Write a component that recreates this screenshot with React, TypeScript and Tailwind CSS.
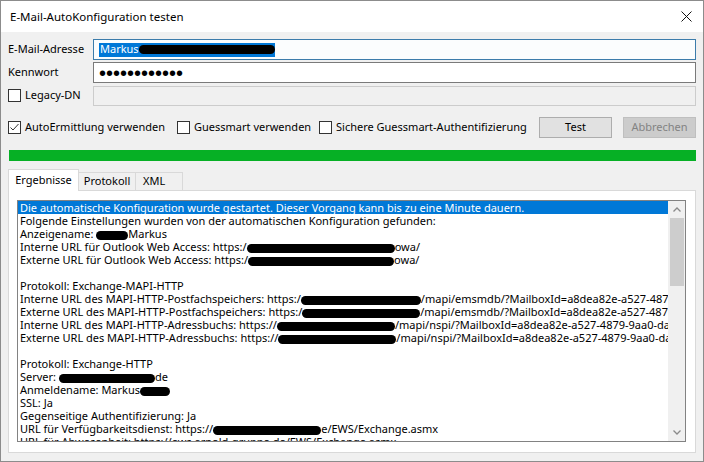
import React from 'react';

type Seg = string | { b: string };

const lines: Seg[][] = [
  ['Die automatische Konfiguration wurde gestartet. Dieser Vorgang kann bis zu eine Minute dauern.'],
  ['Folgende Einstellungen wurden von der automatischen Konfiguration gefunden:'],
  ['Anzeigename: ', { b: 'w-[32px]' }, 'Markus'],
  ['Interne URL für Outlook Web Access: https:/', { b: 'w-[148px]' }, 'owa/'],
  ['Externe URL für Outlook Web Access: https:/', { b: 'w-[146px]' }, 'owa/'],
  [''],
  ['Protokoll: Exchange-MAPI-HTTP'],
  ['Interne URL des MAPI-HTTP-Postfachspeichers: https:/', { b: 'w-[120px]' }, '/mapi/emsmdb/?MailboxId=a8dea82e-a527-4879'],
  ['Externe URL des MAPI-HTTP-Postfachspeichers: https:/', { b: 'w-[118px]' }, '/mapi/emsmdb/?MailboxId=a8dea82e-a527-4879'],
  ['Interne URL des MAPI-HTTP-Adressbuchs: https://', { b: 'w-[118px]' }, '/mapi/nspi/?MailboxId=a8dea82e-a527-4879-9aa0-daa'],
  ['Externe URL des MAPI-HTTP-Adressbuchs: https://', { b: 'w-[118px]' }, '/mapi/nspi/?MailboxId=a8dea82e-a527-4879-9aa0-daa'],
  [''],
  ['Protokoll: Exchange-HTTP'],
  ['Server: ', { b: 'w-[96px]' }, 'de'],
  ['Anmeldename: Markus', { b: 'w-[30px]' }],
  ['SSL: Ja'],
  ['Gegenseitige Authentifizierung: Ja'],
  ['URL für Verfügbarkeitsdienst: https://', { b: 'w-[108px]' }, 'e/EWS/Exchange.asmx'],
  ['URL für Abwesenheit: https://ews.arnold-gruppe.de/EWS/Exchange.asmx'],
];

const Blob = ({ cls }: { cls: string }) => (
  <span className={`inline-block h-[9px] rounded-full bg-black align-middle ${cls}`} />
);

const Checkbox = ({ checked = false }: { checked?: boolean }) => (
  <span className="w-[13px] h-[13px] shrink-0 border border-[#333333] bg-white flex items-center justify-center">
    {checked && (
      <svg width="11" height="11" viewBox="0 0 11 11">
        <polyline points="1.5,5.5 4,8 9.5,2" fill="none" stroke="#333333" strokeWidth="1" />
      </svg>
    )}
  </span>
);

const Chevron = ({ up }: { up?: boolean }) => (
  <svg width="8" height="5" viewBox="0 0 8 5">
    <polyline
      points={up ? '0.5,4.5 4,1 7.5,4.5' : '0.5,0.5 4,4 7.5,0.5'}
      fill="none"
      stroke="#8a8a8a"
      strokeWidth="1.3"
    />
  </svg>
);

export default function App() {
  return (
    <div className="w-[704px] h-[462px] flex flex-col bg-[#f0f0f0] border border-[#8c8c8c] text-[11px] text-black font-['Noto_Sans',sans-serif] overflow-hidden">
      {/* title bar */}
      <div className="h-[31px] shrink-0 bg-white flex items-center justify-between pl-[9px] pr-[11px]">
        <span className="text-[11.5px]">E-Mail-AutoKonfiguration testen</span>
        <svg width="11" height="11" viewBox="0 0 11 11">
          <line x1="0.5" y1="0.5" x2="10.5" y2="10.5" stroke="#111" strokeWidth="1" />
          <line x1="10.5" y1="0.5" x2="0.5" y2="10.5" stroke="#111" strokeWidth="1" />
        </svg>
      </div>

      <div className="flex flex-col px-[7px] pt-[7px]">
        <div className="flex items-center h-[21px]">
          <span className="w-[85px] shrink-0">E-Mail-Adresse</span>
          <div className="flex-1 h-[21px] border border-[#3c7cab] bg-[#fbfdfe] flex items-center pl-[5px]">
            <span className="h-[14px] flex items-center bg-[#0078d7] text-white pl-[1px]">
              Markus
              <Blob cls="w-[136px]" />
            </span>
          </div>
        </div>
        <div className="flex items-center h-[21px] mt-[2px]">
          <span className="w-[85px] shrink-0">Kennwort</span>
          <div className="flex-1 h-[21px] border border-[#7a7a7a] bg-white flex items-center pl-[5px]">
            <span className="font-['Liberation_Sans',sans-serif] text-[20px] leading-none">••••••••••••</span>
          </div>
        </div>
        <div className="flex items-center h-[21px] mt-[2px]">
          <span className="w-[85px] shrink-0 flex items-center gap-[4px]">
            <Checkbox />
            Legacy-DN
          </span>
          <div className="flex-1 h-[20px] border border-[#cccccc] bg-[#f0f0f0]" />
        </div>

        <div className="flex items-center h-[21px] mt-[11px]">
          <span className="w-[169px] flex items-center gap-[4px]">
            <Checkbox checked />
            AutoErmittlung verwenden
          </span>
          <span className="w-[142px] flex items-center gap-[4px]">
            <Checkbox />
            Guessmart verwenden
          </span>
          <span className="flex-1 flex items-center gap-[4px]">
            <Checkbox />
            Sichere Guessmart-Authentifizierung
          </span>
          <button className="w-[73px] h-[21px] border border-[#adadad] bg-[#e1e1e1] text-[11px]">Test</button>
          <button className="w-[73px] h-[21px] ml-[11px] border border-[#bfbfbf] bg-[#cccccc] text-[#838383] text-[11px]">
            Abbrechen
          </button>
        </div>

        <div className="h-[11px] mt-[12px] ml-[1px] bg-[#06b025]" />

        {/* tabs */}
        <div className="flex items-end h-[22px] mt-[8px]">
          <div className="w-[71px] h-[22px] bg-white border-t border-l border-r border-[#d9d9d9] flex items-center justify-center pb-[1px]">
            Ergebnisse
          </div>
          <div className="w-[57px] h-[19px] bg-[#f0f0f0] border-t border-r border-b border-[#d9d9d9] flex items-center justify-center">
            Protokoll
          </div>
          <div className="w-[47px] h-[19px] bg-[#f0f0f0] border-t border-r border-b border-[#d9d9d9] flex items-center pl-[7px]">
            XML
          </div>
          <div className="flex-1 border-b border-[#d9d9d9]" />
        </div>

        <div className="h-[262px] bg-white border-l border-r border-b border-[#d9d9d9] pl-[8px] pr-[9px] pt-[9px]">
          <div className="h-[242px] border border-[#828282] bg-white flex">
            <div className="flex-1 overflow-hidden">
              {lines.map((segs, i) => (
                <div
                  key={i}
                  className={`h-[13px] leading-[13px] whitespace-nowrap pl-[2px] ${
                    i === 0 ? 'bg-[#0078d7] text-white' : ''
                  }`}
                >
                  {segs.map((s, j) =>
                    typeof s === 'string' ? <span key={j}>{s}</span> : <Blob key={j} cls={s.b} />
                  )}
                </div>
              ))}
            </div>
            <div className="w-[17px] shrink-0 bg-[#f0f0f0] flex flex-col">
              <div className="h-[17px] flex items-center justify-center">
                <Chevron up />
              </div>
              <div className="flex-1">
                <div className="h-[68px] ml-[2px] mr-[1px] bg-[#cdcdcd]" />
              </div>
              <div className="h-[17px] flex items-center justify-center">
                <Chevron />
              </div>
            </div>
          </div>
        </div>
      </div>
    </div>
  );
}
